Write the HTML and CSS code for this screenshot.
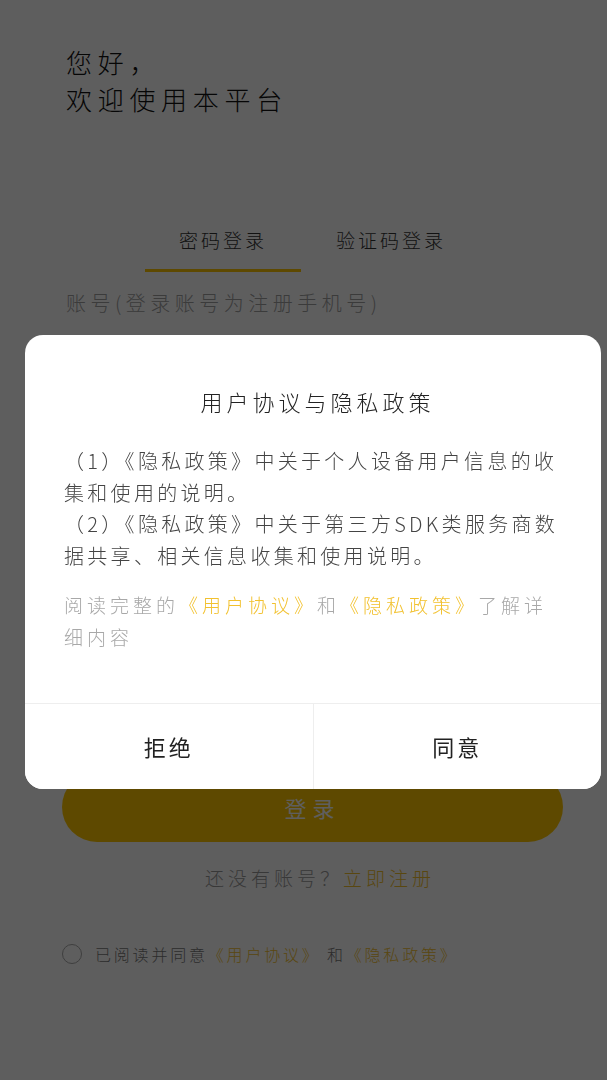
FILE: index.html
```html
<!DOCTYPE html>
<html lang="zh-CN">
<head>
  <meta charset="UTF-8">
  <title>登录</title>
  <link rel="stylesheet" href="styles.css">
</head>
<body>

  <div class="pagina">
    <h1 class="saludo">您好，<br>欢迎使用本平台</h1>

    <div class="pestanas">
      <div class="pestana activa">密码登录</div>
      <div class="pestana">验证码登录</div>
    </div>

    <div class="campo">
      <label>账号(登录账号为注册手机号)</label>
      <input placeholder="请输入账号" />
    </div>
    <div class="campo">
      <label>密码</label>
      <input type="password" placeholder="请输入密码" />
    </div>

    <button class="entrar">登录</button>

    <p class="registro">还没有账号？<a href="#">立即注册</a></p>

    <div class="acuerdo">
      <span class="circulo"></span>
      <span>已阅读并同意<a href="#">《用户协议》</a> 和<a href="#">《隐私政策》</a></span>
    </div>
  </div>

  <div class="capa">
    <div class="dialogo">
      <div class="contenido">
        <h2>用户协议与隐私政策</h2>
        <p class="texto">
          （1）《隐私政策》中关于个人设备用户信息的收<br>集和使用的说明。<br>
          （2）《隐私政策》中关于第三方SDK类服务商数<br>据共享、相关信息收集和使用说明。
        </p>
        <p class="nota">阅读完整的<a href="#">《用户协议》</a>和<a href="#">《隐私政策》</a>了解详<br>细内容</p>
      </div>
      <div class="botones">
        <button class="rechazar">拒绝</button>
        <button class="aceptar">同意</button>
      </div>
    </div>
  </div>

</body>
</html>
```

FILE: styles.css
```css
html, body {
  margin: 0;
  padding: 0;
}

body {
  font-family: "Noto Sans CJK SC", "Noto Sans", sans-serif;
  font-weight: 300;
  background: #fff;
  color: #222;
  width: 607px;
  height: 1080px;
  overflow: hidden;
}

.pagina {
  padding: 43px 44px 0 66px;
}

.saludo {
  margin: 0;
  font-size: 26px;
  font-weight: 300;
  line-height: 37px;
  letter-spacing: 5.7px;
  color: #111;
}

.pestanas {
  display: flex;
  gap: 12px;
  margin: 108px 0 0 79px;
}

.pestana {
  width: 156px;
  text-align: center;
  font-size: 19px;
  line-height: 30px;
  letter-spacing: 3px;
  padding-bottom: 14px;
  border-bottom: 3px solid transparent;
  color: #333;
}

.pestana.activa {
  border-bottom-color: #ffc700;
}

.campo {
  margin-top: 16px;
  height: 110px;
}

.campo label {
  display: block;
  font-size: 20px;
  line-height: 30px;
  letter-spacing: 4.5px;
  color: #a0a0a0;
}

.campo input {
  width: 100%;
  border: none;
  border-bottom: 1px solid #eee;
  padding: 14px 0;
  font-size: 17px;
  font-family: inherit;
}

.entrar {
  display: block;
  width: 501px;
  height: 70px;
  margin: 248px 0 0 -4px;
  border: none;
  border-radius: 35px;
  background: #ffc700;
  color: #fff;
  font-family: inherit;
  font-size: 22px;
  letter-spacing: 6px;
}

.registro {
  margin: 21px 0 0 0;
  padding-left: 139px;
  font-size: 19px;
  line-height: 30px;
  letter-spacing: 4px;
  color: #999;
}

.registro a,
.acuerdo a {
  color: #f2c12e;
  text-decoration: none;
}

.acuerdo {
  display: flex;
  align-items: center;
  gap: 13px;
  margin: 49px 0 0 -4px;
  font-size: 16px;
  line-height: 24px;
  letter-spacing: 2.8px;
  color: #777;
}

.circulo {
  width: 18px;
  height: 18px;
  border: 1px solid #aaa;
  border-radius: 50%;
}

.capa {
  position: fixed;
  inset: 0;
  background: rgba(0, 0, 0, 0.63);
}

.dialogo {
  margin: 335px 0 0 25px;
  width: 576px;
  background: #fff;
  border-radius: 18px;
  overflow: hidden;
}

.contenido {
  padding: 49px 30px 50px 39px;
}

.dialogo h2 {
  margin: 0;
  text-align: center;
  font-size: 22px;
  font-weight: 300;
  line-height: 34px;
  letter-spacing: 4px;
  color: #222;
}

.texto {
  margin: 27px 0 0 0;
  font-size: 20px;
  line-height: 31.7px;
  letter-spacing: 3.3px;
  color: #444;
  white-space: nowrap;
}

.nota {
  margin: 17px 0 0 0;
  font-size: 19px;
  line-height: 32px;
  letter-spacing: 4px;
  color: #a8a8a8;
  white-space: nowrap;
}

.nota a {
  color: #f2c12e;
  text-decoration: none;
}

.botones {
  display: flex;
  border-top: 1px solid #eee;
}

.botones button {
  flex: 1;
  height: 85px;
  border: none;
  background: #fff;
  font-family: inherit;
  font-size: 22px;
  letter-spacing: 3px;
  color: #222;
}

.botones .rechazar {
  border-right: 1px solid #eee;
}
```
